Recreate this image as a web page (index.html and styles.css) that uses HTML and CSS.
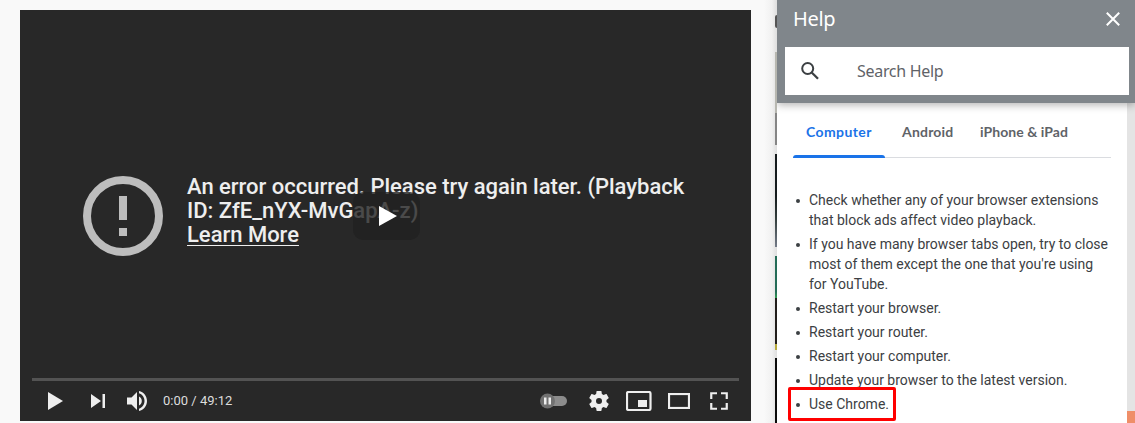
FILE: index.html
```html
<!DOCTYPE html>
<html lang="en">
<head>
<meta charset="utf-8">
<title>Video player help</title>
<link rel="stylesheet" href="styles.css">
</head>
<body>
<div class="page">
  <main class="watch">
    <section class="player">
      <div class="error">
        <svg class="error-icon" width="80" height="80" viewBox="0 0 80 80"><circle cx="40" cy="40" r="36" fill="none" stroke="#bdbdbd" stroke-width="8"/><path d="M36 20h8v24h-8zM36 52h8v8h-8z" fill="#bdbdbd"/></svg>
        <p class="error-text"><span class="line">An error occurred. Please try again later. (Playback</span><span class="line">ID: ZfE_nYX-MvGapA-z)</span><a class="learn">Learn More</a></p>
      </div>
      <div class="big-play"><svg width="66" height="48" viewBox="0 0 66 48"><path d="M26 14v20l18-10z" fill="#fff"/></svg></div>
      <div class="progress"></div>
      <div class="controls">
        <svg class="c-play" width="16" height="18" viewBox="0 0 16 18"><path d="M0 0v18l15-9z"/></svg>
        <svg class="c-next" width="14" height="14" viewBox="0 0 14 14"><path d="M0 0v14l10-7zM11.500 0H14v14h-2.500z"/></svg>
        <svg class="c-volume" width="20" height="20" viewBox="0 0 20 20"><path d="M0 6.500v7h4.500L10 19V1L4.500 6.500zM12 5.500v9c1.700-.8 2.800-2.500 2.800-4.500S13.700 6.300 12 5.500zM12 0v2.300c3.200 1 5.500 4 5.500 7.700s-2.300 6.700-5.500 7.700V20c4.700-1 8-5.100 8-10s-3.300-9-8-10z"/></svg>
        <span class="time">0:00 / 49:12</span>
        <svg class="c-auto" width="28" height="16" viewBox="0 0 28 16"><rect x="8" y="3" width="19" height="10" rx="5" fill="#8c8c8c"/><circle cx="7.500" cy="8" r="7.500" fill="#717171"/><path d="M4 4.500h2.500v7H4zM8.500 4.500H11v7H8.500z"/></svg>
        <svg class="c-gear" width="20" height="20" viewBox="2 2 20 20"><path d="M19.430 12.980c.04-.32.07-.64.07-.98s-.03-.66-.07-.98l2.110-1.650c.19-.15.24-.42.12-.64l-2-3.460c-.12-.22-.39-.3-.61-.22l-2.490 1c-.52-.4-1.080-.73-1.690-.98l-.38-2.650C14.460 2.180 14.250 2 14 2h-4c-.25 0-.46.18-.49.42l-.38 2.650c-.61.25-1.170.59-1.690.98l-2.490-1c-.23-.09-.49 0-.61.22l-2 3.460c-.13.22-.07.49.12.64l2.110 1.650c-.04.32-.07.65-.07.98s.03.66.07.98l-2.110 1.650c-.19.15-.24.42-.12.64l2 3.460c.12.22.39.3.61.22l2.490-1c.52.4 1.080.73 1.690.98l.38 2.650c.03.24.24.42.49.42h4c.25 0 .46-.18.49-.42l.38-2.650c.61-.25 1.170-.59 1.690-.98l2.490 1c.23.09.49 0 .61-.22l2-3.460c.12-.22.07-.49-.12-.64zM12 15a3 3 0 1 1 0-6 3 3 0 0 1 0 6z"/></svg>
        <svg class="c-mini" width="26" height="20" viewBox="0 0 26 20"><rect x="1" y="1" width="23.500" height="18" rx="1.500" class="outline"/><path d="M12 9h9v7h-9z"/></svg>
        <svg class="c-theater" width="22" height="16" viewBox="0 0 22 16"><rect x="1" y="1" width="20" height="14" class="outline"/></svg>
        <svg class="c-full" width="18" height="18" viewBox="0 0 18 18"><path class="outline" d="M1.250 7V1.250H7M11 1.250h5.750V7M16.750 11v5.750H11M7 16.750H1.250V11"/></svg>
      </div>
    </section>
    <div class="thumbs">
      <i class="chip"></i><i class="t1"></i><i class="t2"></i><i class="t3"></i><i class="t4"></i><i class="t5"></i><i class="t6"></i><i class="t7"></i>
    </div>
  </main>
  <aside class="help">
    <header class="help-head">
      <div class="title-row"><h1>Help</h1><svg width="14" height="14" viewBox="0 0 14 14"><path d="M.8.8l12.400 12.400M13.200.8L.8 13.200" fill="none" stroke="#fff" stroke-width="2"/></svg></div>
      <div class="search"><svg width="18" height="18" viewBox="0 0 18 18"><circle cx="6.700" cy="6.500" r="5.500" fill="none" stroke="#3c4043" stroke-width="2"/><path d="M10.700 10.500l6.300 6.300" fill="none" stroke="#3c4043" stroke-width="2.300"/></svg><span>Search Help</span></div>
    </header>
    <div class="scroll">
      <div class="content">
        <nav class="tabs"><span class="tab active"><b class="w1">Computer</b></span><span class="tab"><b class="w2">Android</b></span><span class="tab"><b class="w3">iPhone &amp; iPad</b></span></nav>
        <ul class="steps">
          <li>Check whether any of your browser extensions<br>that block ads affect video playback.</li>
          <li>If you have many browser tabs open, try to close<br>most of them except the one that you're using<br>for YouTube.</li>
          <li>Restart your browser.</li>
          <li>Restart your router.</li>
          <li>Restart your computer.</li>
          <li>Update your browser to the latest version.</li>
          <li class="marked">Use Chrome.</li>
        </ul>
      </div>
      <div class="bar"><div class="thumb"></div></div>
    </div>
  </aside>
</div>
</body>
</html>
```

FILE: styles.css
```css
*, *::before, *::after { box-sizing: border-box; }
body { margin: 0; background: #f9f9f9; font-family: Roboto, sans-serif; overflow: hidden; }
svg { display: block; flex: none; }
.page { display: grid; grid-template-columns: 777px 358px; height: 423px; }
.watch { display: flex; justify-content: space-between; padding-left: 20px; min-height: 0; }
.player { position: relative; display: flex; flex-direction: column; width: 731px; height: 411px; margin-top: 10px; background: #282828; }
.error { display: flex; gap: 24px; height: 368px; padding: 165px 0 0 63px; }
.error-icon { margin-top: 1px; }
.error-text { margin: 0; color: #eee; font-size: 22px; font-weight: 500; line-height: 24px; letter-spacing: -.015px; white-space: nowrap; }
.line { display: block; }
.learn { text-decoration: underline; text-decoration-thickness: 1px; text-underline-offset: 3px; }
.big-play { position: absolute; left: 333px; top: 182px; width: 67px; height: 48px; border-radius: 10px; background: rgba(33, 33, 33, .8); }
.progress { height: 3px; margin: 0 12px; background: #535353; }
.controls { display: flex; align-items: center; height: 40px; padding: 0 23px 0 28px; fill: #eee; }
.outline { fill: none; stroke: #eee; stroke-width: 2.2; }
.c-next { margin-left: 27px; }
.c-volume { margin-left: 22px; }
.time { margin-left: 16px; color: #ddd; font-size: 13px; flex: 1; position: relative; top: -1px; }
.c-gear { margin-left: 21px; }
.c-mini { margin-left: 17px; }
.c-theater { margin-left: 16px; }
.c-full { margin-left: 20px; }
.thumbs { display: flex; flex-direction: column; width: 26px; padding-left: 24px; background: linear-gradient(90deg, #f9f9f9 50%, #f1f1f1 80%, #dedede); }
.thumbs i { flex: none; width: 2px; }
.chip { height: 13px; margin-top: 15px; background: #555; border-radius: 2px 0 0 2px; }
.t1 { height: 61px; margin-top: 24px; background: #b7b7b0; }
.t2 { height: 32px; background: #858585; }
.t3 { height: 93px; margin-top: 9px; background: linear-gradient(#151b1d 45%, #343f3d 70%, #747b89); }
.t4 { height: 42px; margin-top: 9px; background: linear-gradient(#246c57 85%, #319d52); }
.t5 { height: 46px; background: #211d1b; }
.t6 { height: 6px; background: #b6a93c; }
.t7 { height: 65px; margin-top: 8px; background: #0b0b0b; }
.help { display: flex; flex-direction: column; background: #fff; min-height: 0; }
.help-head { position: relative; height: 103px; padding: 0 6px 8px 8px; background: #80868b; box-shadow: 0 2px 8px rgba(0, 0, 0, .3); clip-path: inset(0 0 -14px 0); flex: none; }
.title-row { display: flex; align-items: center; justify-content: space-between; height: 47px; padding: 0 9px 9px 8px; }
h1 { margin: 0; color: #fff; font: 400 20px/38px "Noto Sans", sans-serif; letter-spacing: -.3px; }
.search { display: flex; align-items: center; gap: 38px; height: 48px; padding-left: 16px; background: #fff; color: #5f6368; font: 16px/24px "Noto Sans", sans-serif; letter-spacing: -.3px; }
.scroll { display: flex; height: 320px; }
.content { width: 350px; padding: 0 16px; }
.bar { display: flex; align-items: flex-end; width: 8px; background: #e4e4e4; }
.thumb { width: 8px; height: 12px; background: #ef8e68; }
.tabs { display: flex; height: 55px; border-bottom: 1px solid #dadce0; }
.tab { height: 55px; padding: 0 13px; color: #5f6368; font: 14px/57px Lato, sans-serif; }
.tab b { display: block; height: 52px; font-weight: 700; white-space: nowrap; }
.tab .w1 { width: 66px; letter-spacing: .4px; }
.tab .w2 { width: 52px; letter-spacing: .2px; }
.tab .w3 { width: 88px; letter-spacing: .05px; }
.active { margin-right: 4px; color: #1a73e8; }
.active::after { content: ""; display: block; height: 3px; margin: 0 -13px; border-radius: 3px 3px 0 0; background: #1a73e8; }
.steps { margin: 0; padding: 32px 0 0 16px; list-style: none; color: #3c4043; font-size: 14px; line-height: 20px; white-space: nowrap; }
.steps li { position: relative; margin-bottom: 4px; }
.steps li::before { content: ""; position: absolute; left: -13px; top: 9px; width: 4px; height: 4px; border-radius: 50%; background: #3c4043; }
.marked::after { content: ""; position: absolute; left: -21px; top: -7px; width: 108px; height: 34px; border: 3px solid #f00; border-radius: 2px; }
```
